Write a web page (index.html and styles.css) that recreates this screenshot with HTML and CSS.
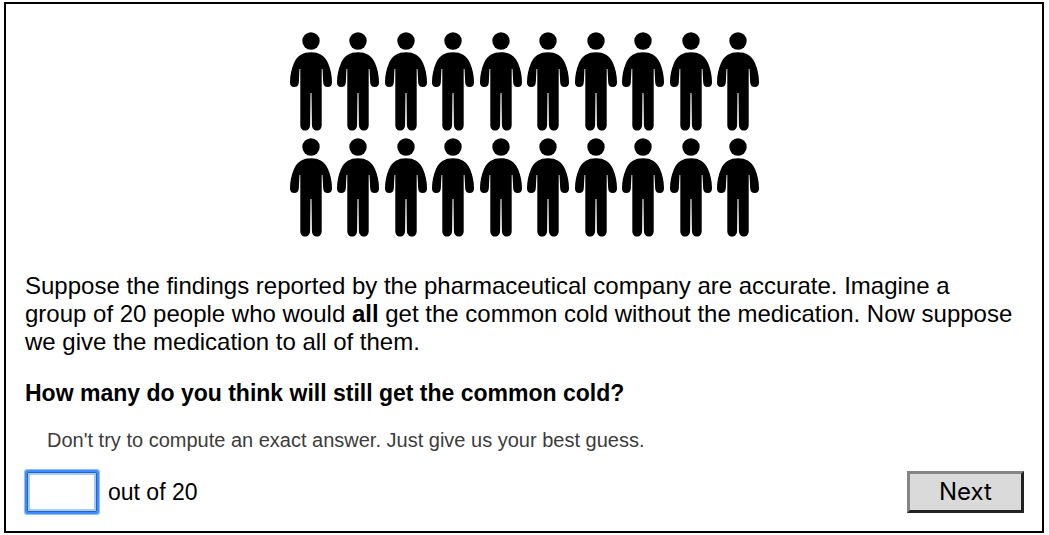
FILE: index.html
```
<!DOCTYPE html>
<html lang="en">
<head>
<meta charset="utf-8">
<title>Question</title>
<link rel="stylesheet" href="styles.css">
</head>
<body>
<svg width="0" height="0" class="defs" aria-hidden="true">
  <symbol id="person" viewBox="0 0 42 99">
    <circle cx="21" cy="9" r="8.700"/>
    <path d="M21 20.300C29 20.300 34.500 23.500 38 31C40.500 37 42 43 42 50.500C42 53.500 40.300 55 37.800 55C35 55 33.400 53.500 33.200 50.500L32.500 37H31.700V93C31.700 96.500 29.800 98.500 27 98.500C24 98.500 22 96.500 21.900 93L21.500 61H20.500L20.100 93C20 96.500 18 98.500 15 98.500C12.200 98.500 10.300 96.500 10.300 93V37H9.500L8.800 50.500C8.600 53.500 7 55 4.200 55C1.700 55 0 53.500 0 50.500C0 43 1.500 37 4 31C7.500 23.500 13 20.300 21 20.300Z"/>
  </symbol>
</svg>
<form class="panel">
  <div class="people" id="people" role="img" aria-label="Twenty people"></div>
  <p class="text">Suppose the findings reported by the pharmaceutical company are accurate. Imagine a group of 20 people who would <b>all</b> get the common cold without the medication. Now suppose we give the medication to all of them.</p>
  <label class="question" for="answer">How many do you think will still get the common cold?</label>
  <p class="hint">Don't try to compute an exact answer. Just give us your best guess.</p>
  <div class="actions">
    <input class="answer" id="answer" type="text">
    <span class="unit">out of 20</span>
    <button class="next" type="button">Next</button>
  </div>
</form>
<script src="people.js"></script>
</body>
</html>
```
FILE: styles.css
```
* {
  box-sizing: border-box;
}
body {
  margin: 2px 5px 1px 4px;
  background: #fff;
  color: #000;
  font: 24px/28px "Liberation Sans", Arial, sans-serif;
}
.defs {
  position: absolute;
}
.panel {
  border: 2px solid #000;
  padding: 28px 18px 18px 19px;
}
.people {
  display: grid;
  grid-template-columns: repeat(10, 42px);
  justify-content: space-between;
  row-gap: 7px;
  max-width: 470px;
  margin: 0 auto 35px;
}
.person {
  display: block;
  width: 42px;
  height: 99px;
}
.text {
  margin: 0 10px 23px 0;
}
.question {
  display: block;
  font-size: 23px;
  font-weight: bold;
}
.hint {
  margin: 19px 0 17px 22px;
  color: #3c3c3c;
  font-size: 20px;
}
.actions {
  display: flex;
  align-items: center;
}
.answer {
  width: 70px;
  height: 40px;
  margin: 0 11px 0 2px;
  border: 1px solid #2463c4;
  padding: 2px 6px;
  background: #fff;
  font: inherit;
  outline: 2px solid #3f8bfb;
  box-shadow: 0 0 0 3px #91c0fd, inset 0 0 0 2px #a5cbfd;
  border-radius: 1px;
}
.unit {
  font-size: 23px;
}
.next {
  width: 117px;
  height: 42px;
  margin-left: auto;
  border: 3px solid;
  border-color: #858585 #222 #222 #858585;
  padding: 0;
  background: #dadada;
  color: #000;
  font: 24px/28px Inter, sans-serif;
}
```
FILE: people.js
```
const person = '<svg class="person"><use href="#person"/></svg>';
document.getElementById("people").innerHTML = person.repeat(20);
```
